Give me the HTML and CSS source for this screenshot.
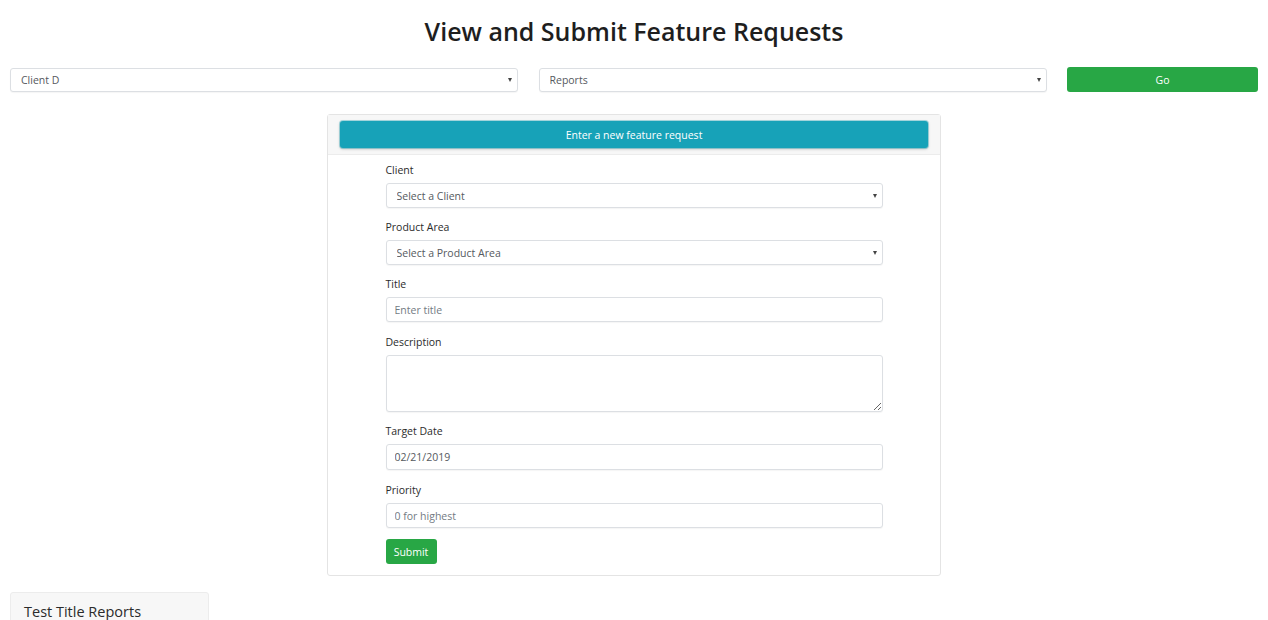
FILE: index.html
```html
<!DOCTYPE html>
<html>
<head>
<meta charset="utf-8">
<link rel="stylesheet" href="styles.css">
</head>
<body>
<h2 class="page-title">View and Submit Feature Requests</h2>
<div class="filter-row">
  <div class="select-wrap"><select class="control"><option>Client D</option></select></div>
  <div class="select-wrap"><select class="control"><option>Reports</option></select></div>
  <button class="btn btn-green btn-go">Go</button>
</div>
<div class="card">
  <div class="card-header">
    <button class="btn btn-teal">Enter a new feature request</button>
  </div>
  <form class="card-body">
    <div class="group">
      <label class="label">Client</label>
      <div class="select-wrap"><select class="control"><option>Select a Client</option></select></div>
    </div>
    <div class="group">
      <label class="label">Product Area</label>
      <div class="select-wrap"><select class="control"><option>Select a Product Area</option></select></div>
    </div>
    <div class="group group-wide">
      <label class="label">Title</label>
      <input class="control" type="text" placeholder="Enter title">
    </div>
    <div class="group">
      <label class="label">Description</label>
      <textarea class="control area"></textarea>
    </div>
    <div class="group group-wide">
      <label class="label">Target Date</label>
      <input class="control tall" type="text" value="02/21/2019">
    </div>
    <div class="group">
      <label class="label">Priority</label>
      <input class="control" type="text" placeholder="0 for highest">
    </div>
    <button class="btn btn-green btn-submit" type="button">Submit</button>
  </form>
</div>
<div class="result-card">Test Title Reports</div>
</body>
</html>
```
FILE: styles.css
```css
html, body {
  margin: 0;
  padding: 0;
  background: #fff;
  overflow: hidden;
}
body {
  font-family: "Open Sans", "Noto Sans", sans-serif;
  color: #212529;
}
.page-title {
  margin: 16px 0 20px;
  text-align: center;
  font-size: 25px;
  font-weight: 600;
  line-height: 31px;
  color: #1e1e1e;
}
.filter-row {
  display: grid;
  grid-template-columns: 1fr 1fr 191px;
  column-gap: 20.5px;
  padding: 0 10px;
  align-items: start;
}
.select-wrap {
  position: relative;
}
.select-wrap::after {
  content: "";
  position: absolute;
  right: 6px;
  top: 50%;
  margin-top: -2px;
  border-left: 2.5px solid transparent;
  border-right: 2.5px solid transparent;
  border-top: 4px solid #444;
  pointer-events: none;
}
.control {
  display: block;
  box-sizing: border-box;
  width: 100%;
  height: 25px;
  margin: 0;
  padding: 0 8px;
  font-family: "Open Sans", "Noto Sans", sans-serif;
  font-size: 10.5px;
  color: #55595e;
  background: #fff;
  border: 1px solid #dcdfe3;
  border-radius: 3px;
  box-shadow: 0 1px 1px rgba(0,0,0,0.04);
  outline: none;
}
select.control {
  -webkit-appearance: none;
  appearance: none;
  padding-left: 10px;
}
.filter-row select.control {
  height: 24px;
  margin-top: 1px;
}
.control::placeholder {
  color: #737b83;
}
.control.tall {
  height: 26px;
}
.control.area {
  height: 57px;
  resize: vertical;
  padding: 6px 8px;
}
.btn {
  font-family: "Open Sans", "Noto Sans", sans-serif;
  font-size: 10.5px;
  border: none;
  border-radius: 3px;
  color: #fff;
  cursor: pointer;
  padding: 0;
}
.btn-green {
  background: #28a745;
}
.btn-go {
  height: 25px;
  width: 100%;
}
.card {
  box-sizing: border-box;
  width: 614px;
  margin: 22px auto 0;
  border: 1px solid #e4e4e4;
  border-radius: 3px;
  background: #fff;
}
.card-header {
  background: #f7f7f7;
  border-bottom: 1px solid #ececec;
  padding: 6px 12px 6px 12px;
}
.btn-teal {
  display: block;
  width: 100%;
  height: 27px;
  background: #17a2b8;
  box-shadow: 0 0 0 1px rgba(23,162,184,0.35), 0 1px 3px rgba(0,0,0,0.25);
}
.card-body {
  width: 497px;
  margin: 0 auto;
  padding: 7px 0 11px;
}
.group {
  margin-bottom: 11px;
}
.group-wide {
  margin-bottom: 12px;
}
.label {
  display: block;
  font-size: 10.5px;
  line-height: 17px;
  margin-bottom: 4px;
  color: #2b2b2b;
}
.btn-submit {
  display: block;
  width: 51px;
  height: 25px;
}
.result-card {
  box-sizing: border-box;
  width: 199px;
  margin: 16px 0 0 10px;
  padding: 9px 13px;
  background: #f7f7f7;
  border: 1px solid #ececec;
  border-radius: 3px;
  font-size: 14.5px;
  line-height: 20px;
  color: #2b2b2b;
}
```
